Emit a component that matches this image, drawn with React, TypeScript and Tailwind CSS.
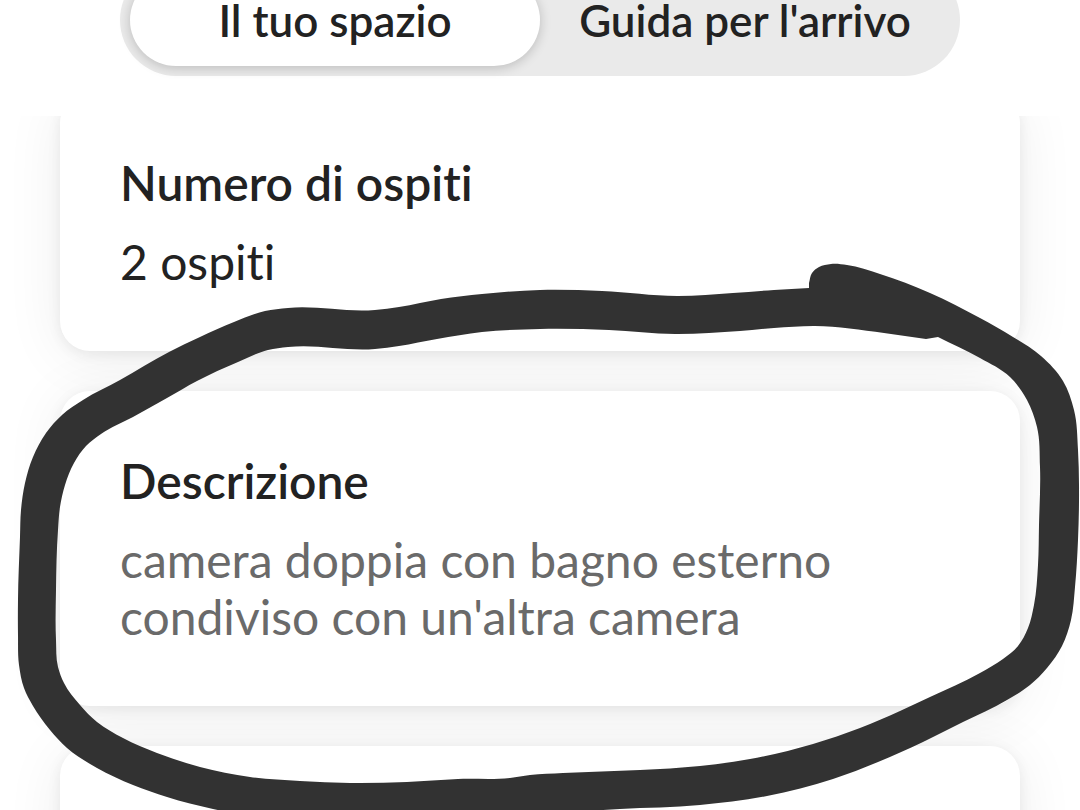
import { useState } from "react";
import type { ReactNode } from "react";

type Point = [number, number];

const outerEdge: Point[] = [
  [809, 283], [812, 273], [819, 267], [831, 264], [847, 265], [880, 274], [930, 293],
  [980, 318], [1013, 337], [1041, 356], [1063, 381], [1074, 410], [1078, 450], [1079, 485],
  [1078, 540], [1075, 587], [1071, 620], [1062, 646], [1047, 668], [1030, 685],
  [1007, 700], [963, 722], [923, 742], [878, 762], [833, 779], [767, 796], [700, 805],
  [620, 809], [540, 814], [400, 822], [300, 821], [213, 809], [167, 797], [133, 785], [97, 768],
  [67, 748], [50, 730], [33, 706], [24, 688], [19, 665], [18, 635], [18, 600],
  [20, 537], [21, 510], [25, 483], [33, 457], [46, 433], [62, 415], [83, 400], [120, 380],
  [169, 352], [200, 337], [234, 322], [265, 311], [288, 308], [375, 310], [399, 307],
  [441, 299], [482, 294], [540, 290], [602, 291], [678, 296], [733, 293],
  [774, 290], [809, 288],
];

const innerEdge: Point[] = [
  [938, 337], [980, 358], [1010, 377], [1027, 400], [1037, 427], [1040, 467], [1039, 525],
  [1038, 565], [1034, 605], [1028, 628], [1018, 646], [1003, 659], [980, 673], [930, 697],
  [900, 711], [860, 728], [813, 744], [750, 759], [700, 766], [640, 770], [563, 773],
  [530, 775], [510, 778], [458, 779], [407, 782], [350, 783], [300, 781], [250, 777], [200, 767],
  [157, 753], [123, 738], [97, 722], [80, 705], [64, 683], [58, 667], [56, 640], [56, 590],
  [58, 530], [60, 507], [65, 485], [74, 463], [86, 446], [101, 434], [133, 417],
  [167, 398], [197, 381], [238, 362], [268, 350], [288, 347], [375, 349], [399, 346], [437, 339],
  [482, 332], [540, 329], [609, 330], [675, 334], [740, 331], [774, 328],
  [815, 326], [884, 333], [926, 339],
];

/** Unit direction of the curve at b, weighted towards the nearer neighbour. */
function tangent(a: Point, b: Point, c: Point): Point {
  const d1 = Math.hypot(b[0] - a[0], b[1] - a[1]) || 1;
  const d2 = Math.hypot(c[0] - b[0], c[1] - b[1]) || 1;
  const x = ((b[0] - a[0]) / d1) * d2 + ((c[0] - b[0]) / d2) * d1;
  const y = ((b[1] - a[1]) / d1) * d2 + ((c[1] - b[1]) / d2) * d1;
  const length = Math.hypot(x, y) || 1;
  return [x / length, y / length];
}

/** Smooth curve through the points, closed with a straight line. */
function smooth(points: Point[]): string {
  const last = points.length - 1;
  const at = (i: number) => points[Math.min(Math.max(i, 0), last)];
  let d = `M${at(0)[0]} ${at(0)[1]}`;
  for (let i = 0; i < last; i++) {
    const [a, b, c, e] = [at(i - 1), at(i), at(i + 1), at(i + 2)];
    const k = Math.hypot(c[0] - b[0], c[1] - b[1]) / 3;
    const start = tangent(a, b, c);
    const end = tangent(b, c, e);
    d += `C${b[0] + start[0] * k} ${b[1] + start[1] * k} `;
    d += `${c[0] - end[0] * k} ${c[1] - end[1] * k} ${c[0]} ${c[1]}`;
  }
  return d + "Z";
}

function MarkerLoop() {
  return (
    <svg
      viewBox="0 0 1080 810"
      aria-hidden="true"
      className="pointer-events-none absolute inset-x-0 top-0 w-full"
    >
      <path d={smooth(outerEdge) + smooth(innerEdge)} fill="#323232" fillRule="evenodd" />
    </svg>
  );
}

const tabs = ["Il tuo spazio", "Guida per l'arrivo"];

function Card({ children }: { children?: ReactNode }) {
  return (
    <section className="flex min-h-[258px] flex-col gap-[22px] rounded-[30px] bg-white px-[60px] pt-[61px] pb-[61px] shadow-[0_3px_14px_rgba(0,0,0,0.07),0_6px_60px_rgba(0,0,0,0.07)]">
      {children}
    </section>
  );
}

export default function App() {
  const [active, setActive] = useState(0);
  return (
    <div className="relative flex h-screen flex-col overflow-hidden bg-white font-['Lato',sans-serif] text-[48px] leading-[57px] text-[#222222] [font-variant-ligatures:none]">
      <header className="px-[120px] pb-10">
        <div role="tablist" className="-mt-9 grid h-28 grid-cols-2 rounded-full bg-[#eaeaea] p-2.5">
          {tabs.map((label, i) => (
            <button
              key={label}
              type="button"
              role="tab"
              aria-selected={active === i}
              onClick={() => setActive(i)}
              className={
                active === i
                  ? "rounded-full bg-white text-[44px] leading-9 font-semibold whitespace-nowrap shadow-[0_2px_12px_rgba(0,0,0,0.2)]"
                  : "rounded-full text-[44px] leading-9 font-semibold whitespace-nowrap"
              }
            >
              {label}
            </button>
          ))}
        </div>
      </header>
      <main className="min-h-0 flex-1 overflow-hidden px-[60px]">
        <div className="-mt-[23px] flex flex-col gap-10">
          <Card>
            <h2 className="font-semibold">Numero di ospiti</h2>
            <p>2 ospiti</p>
          </Card>
          <Card>
            <h2 className="font-semibold">Descrizione</h2>
            <p className="text-[#6a6a6a]">
              camera doppia con bagno esterno condiviso con un'altra camera
            </p>
          </Card>
          <Card />
        </div>
      </main>
      <MarkerLoop />
    </div>
  );
}
